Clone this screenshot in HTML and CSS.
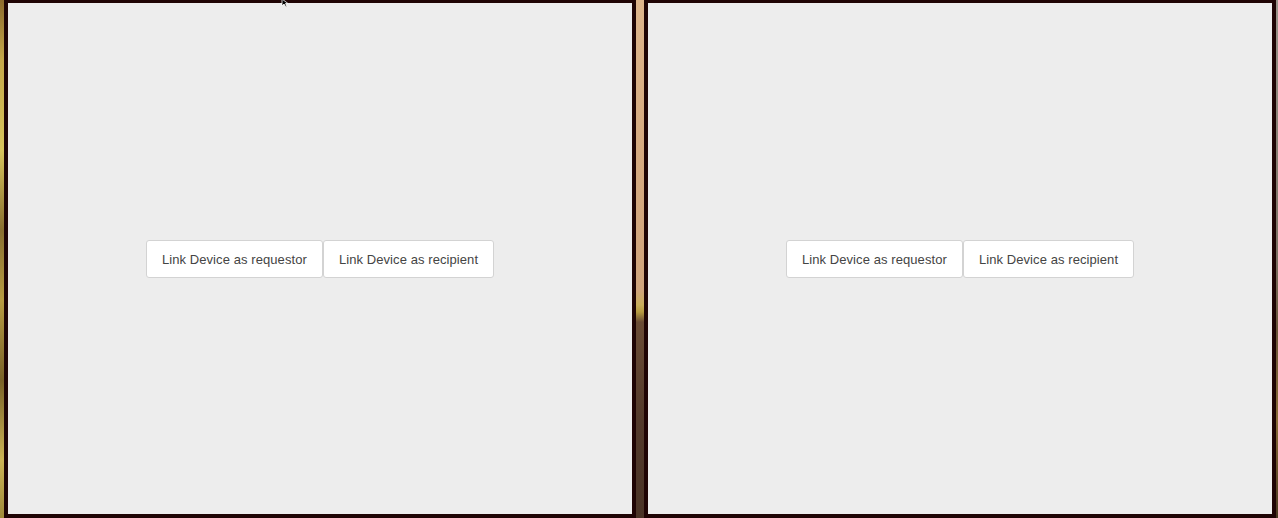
FILE: index.html
```html
<!DOCTYPE html>
<html>
<head>
<meta charset="utf-8">
<title>Link Device</title>
<link rel="stylesheet" href="styles.css">
</head>
<body>
<div class="desktop">
  <div class="window">
    <div class="content">
      <div class="btn-group">
        <button class="btn">Link Device as requestor</button>
        <button class="btn">Link Device as recipient</button>
      </div>
    </div>
  </div>
  <div class="window">
    <div class="content">
      <div class="btn-group">
        <button class="btn">Link Device as requestor</button>
        <button class="btn">Link Device as recipient</button>
      </div>
    </div>
  </div>
  <svg class="cursor" width="10" height="8" viewBox="0 0 10 8">
    <path d="M1 0 L1 7 L3 5 L5 8 L6 7.5 L4.5 4.5 L7 4.5 Z" fill="#000" stroke="#fff" stroke-width="0.8"/>
  </svg>
</div>
</body>
</html>
```

FILE: styles.css
```css
html, body {
  margin: 0;
  padding: 0;
  width: 1278px;
  height: 518px;
  overflow: hidden;
}

.desktop {
  position: relative;
  display: flex;
  gap: 8px;
  padding-left: 4px;
  width: 1278px;
  height: 518px;
  box-sizing: border-box;
  background:
    linear-gradient(180deg, #ddb58b 0, #d6aa80 150px, #d0a47c 290px, #c9ad5a 305px, #b69a40 312px, #6b4c35 322px, #533a2b 420px, #4a3326 518px) 636px 0 / 8px 518px no-repeat,
    linear-gradient(180deg, #8c6a2c 0, #c6a84a 60px, #d8c45c 150px, #8a7030 230px, #b89c42 300px, #7a6228 380px, #cdb455 460px, #a08a3a 518px) 0 0 / 4px 518px no-repeat,
    linear-gradient(180deg, #9a948a 0, #7c7062 260px, #6a5438 330px, #8a6c36 420px, #4a3820 518px) 1276px 0 / 2px 518px no-repeat,
    #2a1a10;
}

.window {
  width: 624px;
  height: 511px;
  border: 4px solid #1f0404;
  border-top-width: 3px;
  background: #ededed;
  display: flex;
}

.content {
  flex: 1;
  display: flex;
  align-items: center;
  justify-content: center;
}

.btn-group {
  display: flex;
}

.btn {
  font-family: "Liberation Sans", Arial, sans-serif;
  font-size: 13px;
  line-height: 16px;
  letter-spacing: 0.08px;
  color: #444;
  background: #fff;
  border: 1px solid #d3d3d3;
  border-radius: 3px;
  padding: 11px 15px 9px;
  margin: 0;
  cursor: pointer;
}

.cursor {
  position: absolute;
  left: 281px;
  top: -1px;
}
```
